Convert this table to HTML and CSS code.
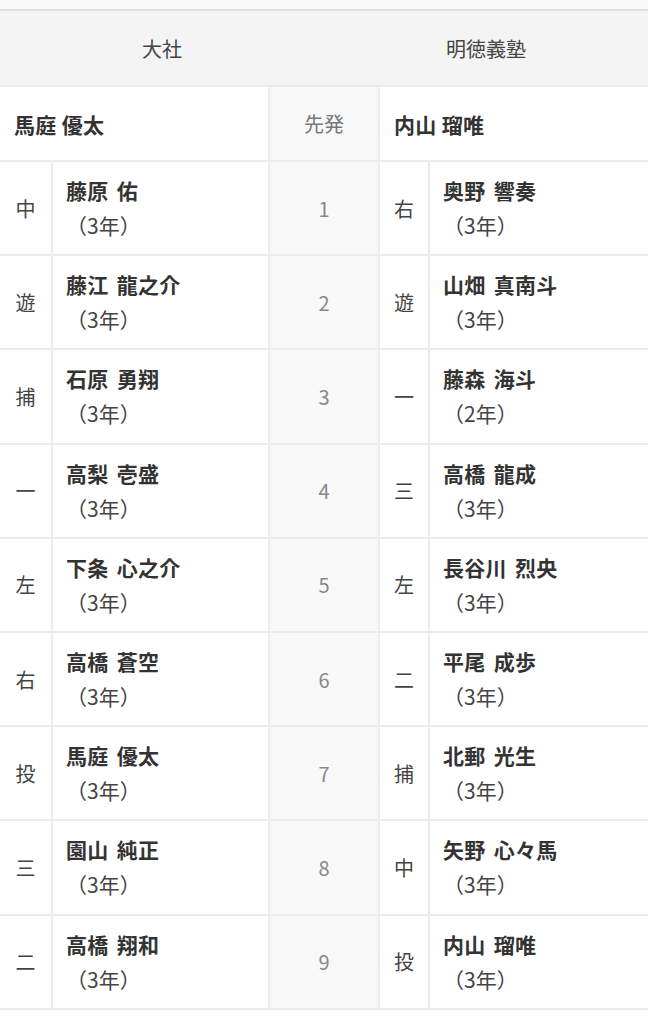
FILE: index.html
```html
<!DOCTYPE html>
<html lang="ja">
<head>
    <meta charset="UTF-8">
    <meta name="viewport" content="width=device-width, initial-scale=1.0">
    <title>スタメン</title>
    <link rel="stylesheet" href="styles.css">
</head>
<body>

    <div class="top-strip"></div>

    <div class="teams">
        <div class="team">大社</div>
        <div class="team">明徳義塾</div>
    </div>

    <div class="lineup">
        <!-- 先発投手 -->
        <div class="pitcher left">馬庭 優太</div>
        <div class="order label">先発</div>
        <div class="pitcher right">内山 瑠唯</div>

        <div class="pos">中</div>
        <div class="player"><span class="name">藤原 佑</span><span class="grade">（3年）</span></div>
        <div class="order">1</div>
        <div class="pos">右</div>
        <div class="player"><span class="name">奥野 響奏</span><span class="grade">（3年）</span></div>

        <div class="pos">遊</div>
        <div class="player"><span class="name">藤江 龍之介</span><span class="grade">（3年）</span></div>
        <div class="order">2</div>
        <div class="pos">遊</div>
        <div class="player"><span class="name">山畑 真南斗</span><span class="grade">（3年）</span></div>

        <div class="pos">捕</div>
        <div class="player"><span class="name">石原 勇翔</span><span class="grade">（3年）</span></div>
        <div class="order">3</div>
        <div class="pos">一</div>
        <div class="player"><span class="name">藤森 海斗</span><span class="grade">（2年）</span></div>

        <div class="pos">一</div>
        <div class="player"><span class="name">高梨 壱盛</span><span class="grade">（3年）</span></div>
        <div class="order">4</div>
        <div class="pos">三</div>
        <div class="player"><span class="name">高橋 龍成</span><span class="grade">（3年）</span></div>

        <div class="pos">左</div>
        <div class="player"><span class="name">下条 心之介</span><span class="grade">（3年）</span></div>
        <div class="order">5</div>
        <div class="pos">左</div>
        <div class="player"><span class="name">長谷川 烈央</span><span class="grade">（3年）</span></div>

        <div class="pos">右</div>
        <div class="player"><span class="name">高橋 蒼空</span><span class="grade">（3年）</span></div>
        <div class="order">6</div>
        <div class="pos">二</div>
        <div class="player"><span class="name">平尾 成歩</span><span class="grade">（3年）</span></div>

        <div class="pos">投</div>
        <div class="player"><span class="name">馬庭 優太</span><span class="grade">（3年）</span></div>
        <div class="order">7</div>
        <div class="pos">捕</div>
        <div class="player"><span class="name">北郵 光生</span><span class="grade">（3年）</span></div>

        <div class="pos">三</div>
        <div class="player"><span class="name">園山 純正</span><span class="grade">（3年）</span></div>
        <div class="order">8</div>
        <div class="pos">中</div>
        <div class="player"><span class="name">矢野 心々馬</span><span class="grade">（3年）</span></div>

        <div class="pos">二</div>
        <div class="player"><span class="name">高橋 翔和</span><span class="grade">（3年）</span></div>
        <div class="order">9</div>
        <div class="pos">投</div>
        <div class="player"><span class="name">内山 瑠唯</span><span class="grade">（3年）</span></div>
    </div>

</body>
</html>
```

FILE: styles.css
```css
body {
    margin: 0;
    background-color: #fff;
    color: #333;
    font-family: "Noto Sans CJK JP", "Noto Sans", sans-serif;
    font-size: 20px;
}
.top-strip {
    height: 9px;
    background-color: #f8f8f8;
    border-bottom: 2px solid #dedede;
}
.teams {
    display: flex;
    height: 74px;
    background-color: #f4f4f4;
    border-bottom: 2px solid #ececec;
}
.team {
    flex: 1;
    display: flex;
    align-items: center;
    justify-content: center;
    color: #444;
}
.lineup {
    display: grid;
    grid-template-columns: 51px 215px 108px 48px 1fr;
    grid-template-rows: 73px;
    grid-auto-rows: 92.2px;
    gap: 2px;
    background-color: #ececec;
    border-bottom: 2px solid #ececec;
}
.lineup > div {
    background-color: #fff;
    display: flex;
    align-items: center;
}
.pitcher {
    font-size: 21px;
    font-weight: bold;
    padding-left: 14px;
    letter-spacing: 0.3px;
}
.pitcher.left {
    grid-column: 1 / 3;
}
.pitcher.right {
    grid-column: 4 / 6;
}
.lineup > .order {
    background-color: #f8f8f8;
    justify-content: center;
    color: #888;
}
.lineup > .label {
    color: #777;
}
.pos {
    justify-content: center;
    color: #444;
}
.lineup > .player {
    flex-direction: column;
    align-items: flex-start;
    justify-content: center;
    padding-left: 13px;
    font-size: 21px;
    line-height: 35px;
}
.name {
    font-weight: bold;
    letter-spacing: 0.3px;
    word-spacing: 3px;
}
.grade {
    color: #444;
}
```
